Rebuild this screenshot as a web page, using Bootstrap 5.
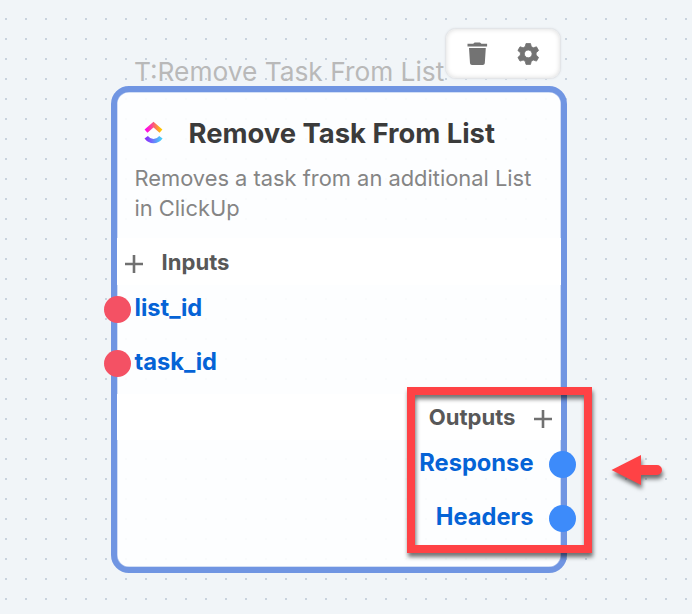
<!DOCTYPE html>
<html lang="en">
<head>
<meta charset="utf-8">
<meta name="viewport" content="width=device-width, initial-scale=1">
<title>Remove Task From List</title>
<link href="https://cdn.jsdelivr.net/npm/bootstrap@5.3.0/dist/css/bootstrap.min.css" rel="stylesheet">
<style>
body{margin:0;font-family:Inter,sans-serif;background:#f1f5f8}
.flow-canvas{width:692px;height:614px;background:conic-gradient(from 90deg at 18px 18px,#c9d3de 90deg,transparent 0) -13px 0/20px 20px #f1f5f8}
.node-label{padding:56px 0 0 134px;height:86px;font-size:26.3px;line-height:32px;color:#b9b9b9;white-space:nowrap}
.tool-panel{left:445px;top:28px;width:116px;height:51px;background:#fff;border:1px solid #e3e5e8;border-radius:11px;box-shadow:inset 0 0 5px #d9d9d9,0 0 2px #dfe2e6}
.node-card{margin-left:111px;width:456px;height:487px;border:6px solid #7095e2;border-radius:18px;background:rgba(254,255,255,.9);background-clip:padding-box;box-shadow:inset 0 0 0 .5px #a6bdec}
.node-title{padding:25px 0 0 24px;height:71px;gap:22.5px}
.node-title h1{margin-top:-2px;font-size:27.4px;line-height:36px;font-weight:700;color:#3b3b3b;white-space:nowrap}
.node-desc{padding-left:17.5px;font-size:21.86px;line-height:30px;color:#858585;height:75px;white-space:nowrap}
.port-head{height:47px;padding-top:2px;background:#fff;font-size:22.1px;font-weight:650;color:#585858}
.port-head svg{margin-top:1px}
.port-head span{margin-top:-1px}
.in-head{padding-top:4px}
.in-head span{margin-left:2.5px}
.out-head{height:46px}
.out-head span{margin-right:2px}
.out-head svg{margin-right:9.5px}
.port{height:54.5px;padding-bottom:6.5px;font-size:23.7px;font-weight:700;color:#0563d6;line-height:30px}
.port span{margin-top:-3px}
.pin{width:27px;height:27px;border-radius:50%;background:#3d8bfa;flex:none}
.in .pin{background:#f45164;margin-left:-13px;margin-right:3.5px}
.out .pin{margin-right:-15px;margin-left:15.5px}
.callout-box{left:407px;top:387px;width:185px;height:166px;border:8px solid #ff4245;filter:drop-shadow(1px 4px 2px rgba(0,0,0,.55))}
.callout-arrow{left:600px;top:445px;filter:drop-shadow(1px 4px 2px rgba(0,0,0,.55))}
</style>
<script src="https://cdn.jsdelivr.net/npm/bootstrap@5.3.0/dist/js/bootstrap.bundle.min.js"></script>
</head>
<body>
<main class="flow-canvas position-relative overflow-hidden">
  <div class="node-label">T:Remove Task From List</div>
  <section class="node-card d-flex flex-column">
    <div class="node-title d-flex align-items-start">
      <svg width="25" height="34" viewBox="0 0 25 34" class="flex-shrink-0">
        <defs>
          <linearGradient id="warm"><stop stop-color="#ff02f0"/><stop offset=".5" stop-color="#fb5b79"/><stop offset="1" stop-color="#ffc800"/></linearGradient>
          <linearGradient id="cool"><stop stop-color="#8930fd"/><stop offset="1" stop-color="#49ccf9"/></linearGradient>
        </defs>
        <path d="M5 14.200L12.500 7.600L20 14.200" fill="none" stroke="url(#warm)" stroke-width="4.300"/>
        <path d="M5.200 20.200Q8.300 24.200 12.500 24.200Q16.800 24.200 19.900 20.200" fill="none" stroke="url(#cool)" stroke-width="4.300"/>
      </svg>
      <h1 class="mb-0">Remove Task From List</h1>
    </div>
    <p class="node-desc m-0">Removes a task from an additional List<br>in ClickUp</p>
    <div class="port-head in-head d-flex align-items-center">
      <svg width="18" height="18" class="ms-2 me-3" stroke="#707070" stroke-width="2.6"><path d="M0 9H18M9 0V18"/></svg>
      <span>Inputs</span>
    </div>
    <div class="in port d-flex align-items-center"><i class="pin"></i><span>list_id</span></div>
    <div class="in port d-flex align-items-center"><i class="pin"></i><span>task_id</span></div>
    <div class="port-head out-head d-flex align-items-center justify-content-end">
      <span>Outputs</span>
      <svg width="18" height="18" class="ms-3" stroke="#707070" stroke-width="2.6"><path d="M0 9H18M9 0V18"/></svg>
    </div>
    <div class="out port d-flex align-items-center justify-content-end"><span>Response</span><i class="pin"></i></div>
    <div class="out port d-flex align-items-center justify-content-end"><span>Headers</span><i class="pin"></i></div>
  </section>
  <div class="tool-panel position-absolute">
    <svg class="d-block" width="114" height="49" viewBox="446 29 114 49" fill="#737373">
      <path d="M467.500 43.800h5.700l1.400-1.200h5.400l1.400 1.200h5.700v2.600h-19.600zM469 48h16.800l-1 15.200q-.2 1.800-2 1.800h-10.800q-1.800 0-2-1.800z"/>
      <path fill-rule="evenodd" stroke="#737373" stroke-width=".8" stroke-linejoin="round" d="M526 43.500h4.500l.8 3.100 2 1.200 3.200-1 2.100 3.700-2.500 2.300v2.300l2.500 2.300-2.100 3.700-3.200-1-2 1.200-.8 3.100h-4.500l-.8-3.100-2-1.200-3.200 1-2.100-3.700 2.500-2.300v-2.300l-2.500-2.300 2.100-3.700 3.200 1 2-1.200zM528.200 50a3.900 3.900 0 1 0 .01 0z"/>
    </svg>
  </div>
  <div class="callout-box position-absolute"></div>
  <svg class="callout-arrow position-absolute" width="70" height="50" viewBox="600 445 70 50" fill="#ff4245"><path d="M611.500 470L641 455v10h16a5 5 0 0 1 0 10h-16v10z"/></svg>
</main>
</body>
</html>
